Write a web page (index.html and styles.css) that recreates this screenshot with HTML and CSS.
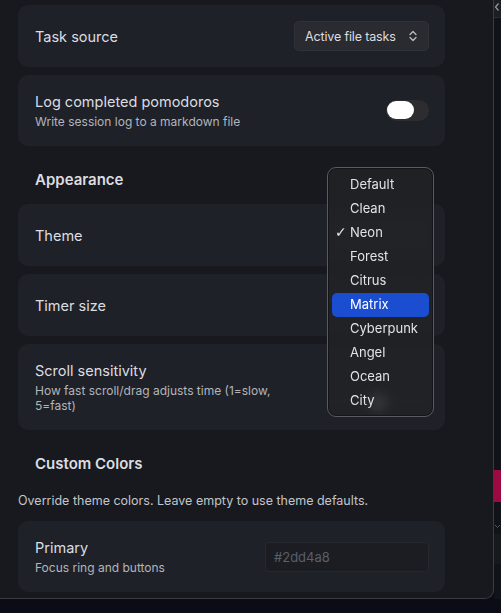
FILE: index.html
```html
<!DOCTYPE html>
<html>
<head>
<meta charset="utf-8">
<link rel="stylesheet" href="styles.css">
</head>
<body>
<div class="screen">
  <div class="panel">
    <div class="card">
      <div class="info"><div class="label">Task source</div></div>
      <div class="select">Active file tasks
        <svg class="updown" width="8" height="12" viewBox="0 0 8 12"><path d="M1 4.5 L4 1.5 L7 4.5 M1 7.5 L4 10.5 L7 7.5" fill="none" stroke="#bfc1c6" stroke-width="1.2" stroke-linecap="round" stroke-linejoin="round"/></svg>
      </div>
    </div>
    <div class="card tall">
      <div class="info"><div class="label">Log completed pomodoros</div><div class="desc">Write session log to a markdown file</div></div>
      <div class="toggle"><div class="knob"></div></div>
    </div>
    <div class="heading">Appearance</div>
    <div class="card">
      <div class="info"><div class="label">Theme</div></div>
      <div class="ghost"></div>
    </div>
    <div class="card">
      <div class="info"><div class="label">Timer size</div></div>
      <div class="ghost"></div>
    </div>
    <div class="card scroll">
      <div class="info"><div class="label">Scroll sensitivity</div><div class="desc">How fast scroll/drag adjusts time (1=slow, 5=fast)</div></div>
      <div class="slider"><div class="thumb"></div></div>
    </div>
    <div class="heading custom">Custom Colors</div>
    <div class="note">Override theme colors. Leave empty to use theme defaults.</div>
    <div class="card tall">
      <div class="info"><div class="label">Primary</div><div class="desc">Focus ring and buttons</div></div>
      <div class="input">#2dd4a8</div>
    </div>

    <div class="menu">
      <div class="item">Default</div>
      <div class="item">Clean</div>
      <div class="item"><span class="check">✓</span>Neon</div>
      <div class="item">Forest</div>
      <div class="item">Citrus</div>
      <div class="item active">Matrix</div>
      <div class="item">Cyberpunk</div>
      <div class="item">Angel</div>
      <div class="item">Ocean</div>
      <div class="item">City</div>
    </div>
  </div>
  <div class="strip">
    <div class="strip-top">
      <svg width="6" height="10" viewBox="0 0 6 10"><path d="M4.5 1.5 L1.5 5 L4.5 8.5" fill="none" stroke="#9a9ca0" stroke-width="1.2"/></svg>
    </div>
    <div class="strip-pink"></div>
    <div class="strip-chev">
      <svg width="7" height="5" viewBox="0 0 7 5"><path d="M1 1 L3.5 3.5 L6 1" fill="none" stroke="#55575c" stroke-width="1"/></svg>
    </div>
    <div class="strip-lite"></div>
  </div>
</div>
</body>
</html>
```
FILE: styles.css
```css
* { box-sizing: border-box; }
html, body { margin: 0; padding: 0; }
body {
  background: #0c0c16;
  font-family: Inter, "Noto Sans", sans-serif;
  color: #dcdde0;
  width: 501px;
  height: 613px;
  overflow: hidden;
}
.screen {
  display: flex;
  height: 599px;
}
.panel {
  position: relative;
  width: 494px;
  height: 599px;
  background: #17191e;
  border-right: 1px solid #3a3c41;
  border-bottom: 1px solid #3a3c41;
  border-bottom-right-radius: 9px;
  padding: 5px 48px 0 18px;
  display: flex;
  flex-direction: column;
  gap: 8px;
  overflow: hidden;
}
.card {
  background: #1f2128;
  border-radius: 10px;
  height: 62px;
  padding: 0 16px 0 17px;
  display: flex;
  align-items: center;
  justify-content: space-between;
  flex-shrink: 0;
}
.card.tall { height: 71px; }
.card.scroll { height: 86px; }
.info { display: flex; flex-direction: column; gap: 4px; }
.label {
  font-size: 14.5px;
  color: #dcdde0;
}
.desc {
  font-size: 12px;
  color: #b2b5bb;
  line-height: 15px;
  max-width: 255px;
}
.select {
  display: flex;
  align-items: center;
  height: 30px;
  width: 135px;
  padding: 0 11px 0 10px;
  justify-content: space-between;
  background: #292b31;
  border: 1px solid #30323a;
  border-radius: 5px;
  font-size: 12.5px;
  letter-spacing: -0.15px;
  color: #dcdde0;
  white-space: nowrap;
}
.ghost {
  width: 95px;
  height: 30px;
  border-radius: 5px;
  background: #2a2c32;
}
.toggle {
  width: 43px;
  height: 21px;
  border-radius: 11px;
  background: #2d2d2f;
  padding: 1px;
}
.knob {
  width: 27px;
  height: 18px;
  border-radius: 9px;
  background: #ffffff;
}
.slider {
  width: 100px;
  height: 4px;
  background: #3a3c42;
  border-radius: 2px;
  position: relative;
  margin-top: 30px;
}
.thumb {
  position: absolute;
  left: 40px;
  top: -7px;
  width: 18px;
  height: 18px;
  border-radius: 50%;
  background: #d0d0d0;
}
.heading {
  font-size: 15px;
  font-weight: 600;
  color: #dcdde0;
  padding: 16px 0 0 17px;
  line-height: 20px;
  height: 42px;
  flex-shrink: 0;
}
.heading.custom { height: 52px; }
.note {
  font-size: 12.5px;
  color: #c3c5ca;
  margin-top: -8px;
  height: 23px;
  line-height: 22px;
  flex-shrink: 0;
}
.input {
  width: 164px;
  height: 30px;
  background: #1b1d22;
  border: 1px solid #262830;
  border-radius: 4px;
  font-size: 13px;
  color: #5a5f69;
  padding: 0 8px;
  display: flex;
  align-items: center;
}
.menu {
  position: absolute;
  left: 327px;
  top: 167px;
  width: 107px;
  height: 250px;
  padding: 5px 4px 4px;
  border-radius: 9px;
  background: rgba(33, 34, 38, 0.88);
  border: 1px solid #5a5b60;
  box-shadow: inset 0 0 0 1px #141518;
  backdrop-filter: blur(6px);
}
.item {
  height: 24px;
  line-height: 23px;
  font-size: 13px;
  color: #e2e3e5;
  padding-left: 18px;
  border-radius: 5px;
  position: relative;
}
.check {
  position: absolute;
  left: 3px;
  top: 0;
  font-size: 14px;
  font-family: "DejaVu Sans", sans-serif;
}
.item.active { background: #1a4dcf; color: #ffffff; }
.strip {
  flex: 1;
  background: #111318;
  display: flex;
  flex-direction: column;
}
.strip-top {
  height: 18px;
  background: #1c1e23;
  border-bottom: 1px solid #2a2c30;
  padding-top: 2px;
}
.strip-top svg { display: block; }
.strip-pink {
  margin-top: 452px;
  height: 32px;
  background: #9c0a42;
}
.strip-chev {
  margin-top: 22px;
  height: 6px;
}
.strip-chev svg { display: block; }
.strip-lite {
  margin-top: 4px;
  height: 30px;
  background: #17191d;
}
```
